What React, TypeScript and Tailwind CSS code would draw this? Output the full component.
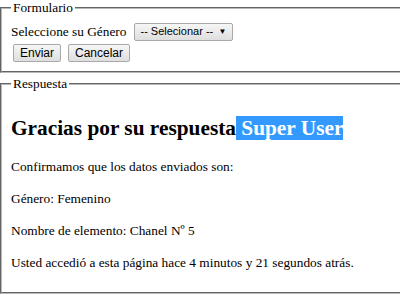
const serif = 'font-["Liberation_Serif","Times_New_Roman",serif]';
const sans = "font-['Liberation_Sans',Arial,sans-serif]";
const btn =
  'flex h-[18px] items-center whitespace-nowrap rounded-[2px] border border-[#a9a9a9] bg-gradient-to-b from-[#f6f6f6] to-[#dedede] px-[6px] leading-none';

export default function App() {
  return (
    <div className={`h-[296px] w-[400px] overflow-hidden bg-white text-[13.33px] text-black ${serif}`}>
      <fieldset className="w-[420px] border-2 border-[#b8b8b8] px-[9px] pb-[9px] pt-[7px] [border-style:groove]">
        <legend className="px-[2px] leading-[15px]">Formulario</legend>
        <div className="flex h-[19px] items-center gap-[8px]">
          <span>Seleccione su Género</span>
          <div className={`${btn} w-[99px] justify-between pl-[5px] pr-[6px] ${sans} text-[11px]`}>
            <span>-- Selecionar --</span>
            <span className="text-[8px]">▼</span>
          </div>
        </div>
        <div className={`mt-[3px] flex gap-[7px] pl-[2px] ${sans} text-[12px]`}>
          <button className={btn}>Enviar</button>
          <button className={btn}>Cancelar</button>
        </div>
      </fieldset>
      <fieldset className="mt-[3px] h-[218px] w-[420px] border-2 border-[#b8b8b8] px-[9px] [border-style:groove]">
        <legend className="px-[2px] leading-[15px]">Respuesta</legend>
        <h2 className="mt-[25px] text-[21.33px] font-bold leading-[24px]">
          Gracias por su respuesta
          <span className="bg-[#3399ff] text-white"> Super User</span>
        </h2>
        <p className="mt-[19px] leading-[16px]">Confirmamos que los datos enviados son:</p>
        <p className="mt-[16px] leading-[16px]">Género: Femenino</p>
        <p className="mt-[16px] leading-[16px]">Nombre de elemento: Chanel Nº 5</p>
        <p className="mt-[16px] leading-[16px]">Usted accedió a esta página hace 4 minutos y 21 segundos atrás.</p>
      </fieldset>
    </div>
  );
}
